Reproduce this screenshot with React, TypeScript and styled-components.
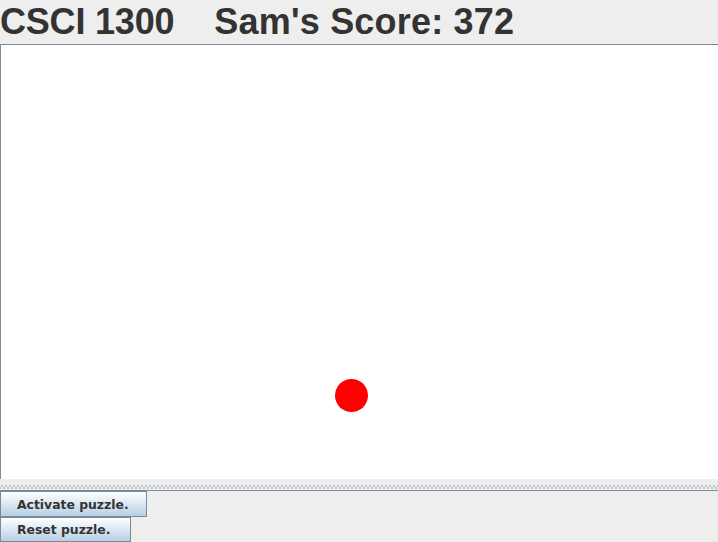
import React from "react";
import styled, { createGlobalStyle } from "styled-components";

const GlobalStyle = createGlobalStyle`
  html, body {
    margin: 0;
    padding: 0;
    background: #eeeeee;
    overflow: hidden;
  }
`;

const Frame = styled.div`
  width: 718px;
  height: 542px;
  display: flex;
  flex-direction: column;
  background: #eeeeee;
`;

const Header = styled.div`
  height: 44px;
  display: flex;
  align-items: center;
  gap: 40px;
  border-bottom: 1px solid #7a8a99;
  font-family: "Liberation Sans", Arial, sans-serif;
  font-weight: bold;
  font-size: 36px;
  color: #333333;
  white-space: nowrap;
`;

const Title = styled.span<{ $spacing?: number }>`
  padding-top: 1px;
  letter-spacing: ${(p) => p.$spacing ?? 0}px;
`;

const Canvas = styled.div`
  position: relative;
  height: 435px;
  background: #ffffff;
  border-left: 1px solid #7a8a99;
`;

const Ball = styled.div`
  position: absolute;
  width: 33px;
  height: 33px;
  border-radius: 50%;
  background: #ff0000;
`;

const Divider = styled.div`
  height: 12px;
  border-bottom: 1px solid #7a8a99;
  box-sizing: border-box;
  background-image:
    radial-gradient(circle, #8899aa 0.6px, transparent 0.8px),
    radial-gradient(circle, #8899aa 0.6px, transparent 0.8px);
  background-size: 4px 4px, 4px 4px;
  background-position: 0 5px, 2px 7px;
  background-repeat: repeat-x;
`;

const Buttons = styled.div`
  display: flex;
  flex-direction: column;
  align-items: flex-start;
`;

const Button = styled.button<{ $w: number; $h: number }>`
  width: ${(p) => p.$w}px;
  height: ${(p) => p.$h}px;
  margin: 0;
  padding: 0 0 0 16px;
  text-align: left;
  border: 1px solid #7a8a99;
  background: linear-gradient(#ffffff 0%, #e6eef6 35%, #b8cfe5 100%);
  font-family: "DejaVu Sans", Verdana, sans-serif;
  font-weight: bold;
  font-size: 12.4px;
  color: #333333;
  box-sizing: border-box;
`;

export default function App() {
  return (
    <Frame>
      <GlobalStyle />
      <Header>
        <Title $spacing={-0.2}>CSCI 1300</Title>
        <Title $spacing={0.2}>Sam's Score: 372</Title>
      </Header>
      <Canvas>
        <Ball style={{ left: 334, top: 334 }} />
      </Canvas>
      <Divider />
      <Buttons>
        <Button $w={147} $h={26}>Activate puzzle.</Button>
        <Button $w={131} $h={25}>Reset puzzle.</Button>
      </Buttons>
    </Frame>
  );
}
